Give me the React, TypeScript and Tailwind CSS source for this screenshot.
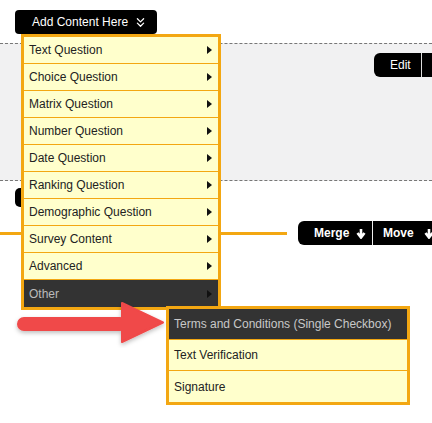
import { ChevronsDown } from "lucide-react";

const mainItems = [
  "Text Question",
  "Choice Question",
  "Matrix Question",
  "Number Question",
  "Date Question",
  "Ranking Question",
  "Demographic Question",
  "Survey Content",
  "Advanced",
  "Other",
];

const otherItems = ["Terms and Conditions (Single Checkbox)", "Text Verification", "Signature"];

function Caret() {
  return (
    <svg width="5" height="8" viewBox="0 0 5 8" className="shrink-0">
      <path d="M0 0 L5 4 L0 8 Z" fill="#111" />
    </svg>
  );
}

function DownArrow() {
  return (
    <svg width="10" height="11" viewBox="0 0 10 11" className="shrink-0">
      <path d="M5 1 V8 M1.5 5 L5 9.5 L8.5 5" stroke="#fff" strokeWidth="2.6" fill="none" />
    </svg>
  );
}

function RedArrow() {
  return (
    <svg width="160" height="50" viewBox="0 0 160 50" className="absolute left-[12px] top-[298px]">
      <defs>
        <filter id="sh" x="-10%" y="-30%" width="120%" height="170%">
          <feDropShadow dx="0" dy="2" stdDeviation="2" floodColor="#000" floodOpacity="0.25" />
        </filter>
      </defs>
      <g filter="url(#sh)">
        <rect x="5" y="19" width="110" height="14" rx="7" fill="#f04848" />
        <path d="M110 5 L151 24.5 L110 44 Z" fill="#f04848" stroke="#f04848" strokeWidth="2" strokeLinejoin="round" />
      </g>
    </svg>
  );
}

export default function App() {
  return (
    <div className="relative w-[432px] h-[423px] overflow-hidden bg-white font-['Liberation_Sans',Arial,sans-serif] text-[12px]">
      <div className="h-[43px] pl-[15px] pt-[10px]">
        <button className="h-[24px] w-[142px] rounded-[4px] bg-black text-white flex items-center pl-[17px] gap-[5px]">
          <span>Add Content Here</span>
          <ChevronsDown size={15} strokeWidth={2} />
        </button>
      </div>

      <div className="h-[138px] bg-[#f1f1f2] border-y border-dashed border-[#777] flex justify-end pt-[9px]">
        <div className="flex h-[24px] -mr-[20px] text-white">
          <div className="w-[47px] bg-black rounded-l-[6px] flex items-center pl-[16px]">Edit</div>
          <div className="w-px bg-[#ddd]" />
          <div className="w-[30px] bg-black" />
        </div>
      </div>

      <div className="pt-[7px]">
        <div className="ml-[15px] h-[19px] w-[60px] rounded-[5px] bg-black" />
        <div className="mt-[14px] flex items-center gap-[11px]">
          <div className="w-[287px] shrink-0 h-[3px] bg-[#f3a712]" />
          <div className="flex shrink-0 h-[24px] text-white font-bold">
            <div className="w-[74px] bg-black rounded-l-[6px] flex items-center pl-[16px] gap-[7px]">
              <span>Merge</span>
              <DownArrow />
            </div>
            <div className="w-px bg-[#eee]" />
            <div className="w-[70px] bg-black flex items-center pl-[10px] gap-[10px]">
              <span>Move</span>
              <DownArrow />
            </div>
          </div>
        </div>
      </div>

      <div className="absolute left-[21px] top-[34px] w-[200px] border-[3px] border-[#f3a712] bg-[#ffffcc] divide-y divide-[#f3a712]">
        {mainItems.map((item) => (
          <div
            key={item}
            className={`h-[27px] flex items-center justify-between pl-[5px] pr-[6px] ${
              item === "Other" ? "bg-[#333] text-[#bbb]" : "text-[#222]"
            }`}
          >
            <span>{item}</span>
            <Caret />
          </div>
        ))}
      </div>

      <div className="absolute left-[166px] top-[306px] w-[244px] border-[3px] border-[#f3a712] bg-[#ffffcc] divide-y divide-[#f3a712]">
        {otherItems.map((item, i) => (
          <div
            key={item}
            className={`h-[31px] flex items-center pl-[5px] ${i === 0 ? "bg-[#333] text-[#c8c8c8]" : "text-[#222]"}`}
          >
            {item}
          </div>
        ))}
      </div>

      <RedArrow />
    </div>
  );
}
